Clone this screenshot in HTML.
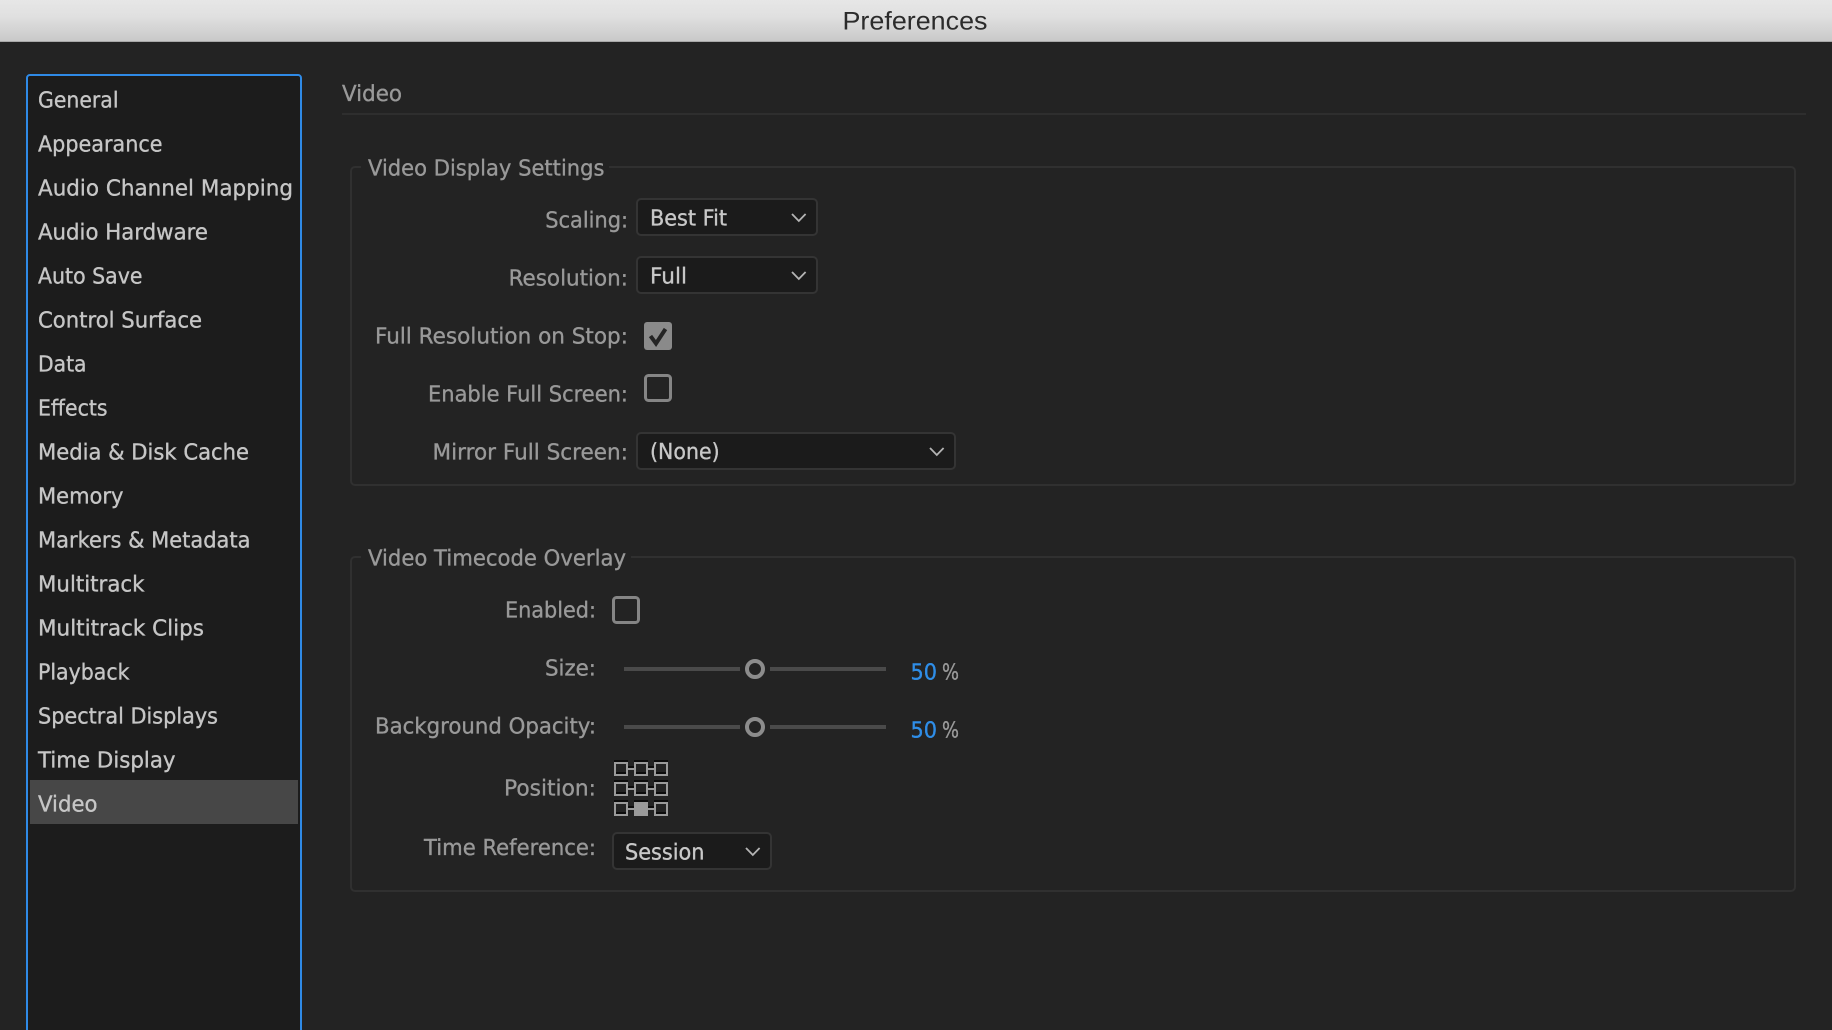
<!DOCTYPE html>
<html lang="en">
<head>
<meta charset="utf-8">
<title>Preferences</title>
<style>
html,body{margin:0;padding:0;width:1832px;height:1030px;overflow:hidden;background:#232323}
svg{display:block;position:absolute;left:0;top:0}
text{font-family:"DejaVu Sans","Liberation Sans",sans-serif;font-size:22px;text-rendering:geometricPrecision;stroke-width:.35px}
.s{fill:#c6c6c6;stroke:#c6c6c6}
.l{fill:#999;stroke:#999}
.v{fill:#c8c8c8;stroke:#c8c8c8}
.b{fill:#2f8ee8;stroke:#2f8ee8}
.dd{fill:#1b1b1b;stroke:#343434;stroke-width:2}
.ch{fill:none;stroke:#b4b4b4;stroke-width:1.800}
.cb{fill:none;stroke:#858585;stroke-width:3}
.gr{fill:none;stroke:#303030;stroke-width:2}
.sl{fill:#4a4a4a}
.kn{fill:#232323;stroke:#8c8c8c;stroke-width:4}
.pc{fill:#232323;stroke:#9a9a9a;stroke-width:2}
</style>
</head>
<body>
<svg width="1832" height="1030" viewBox="0 0 1832 1030" xmlns="http://www.w3.org/2000/svg">
<defs>
<linearGradient id="tb" x1="0" y1="0" x2="0" y2="1">
<stop offset="0" stop-color="#e7e7e7"/><stop offset="0.4" stop-color="#e0e0e0"/><stop offset="1" stop-color="#c9c9c9"/>
</linearGradient>
</defs>
<rect width="1832" height="1030" fill="#232323"/>
<rect width="1832" height="41" fill="url(#tb)"/>
<rect y="41" width="1832" height="1" fill="#a8a8a8"/>
<text x="842.500" y="29.500" textLength="145" lengthAdjust="spacingAndGlyphs" style="font-family:'Liberation Sans',sans-serif;font-size:25.500px;stroke-width:0" fill="#2b2b2b">Preferences</text>

<!-- sidebar -->
<rect x="27" y="75" width="274" height="1000" rx="3" fill="#1c1c1c" stroke="#2f8ae6" stroke-width="2"/>
<rect x="30" y="780" width="268" height="44" fill="#474747"/>
<text class="s" x="38" y="107.500" textLength="80.500" lengthAdjust="spacingAndGlyphs">General</text>
<text class="s" x="38" y="151.500" textLength="124.500" lengthAdjust="spacingAndGlyphs">Appearance</text>
<text class="s" x="38" y="195.500" textLength="255" lengthAdjust="spacingAndGlyphs">Audio Channel Mapping</text>
<text class="s" x="38" y="239.500" textLength="170" lengthAdjust="spacingAndGlyphs">Audio Hardware</text>
<text class="s" x="38" y="283.500" textLength="104.500" lengthAdjust="spacingAndGlyphs">Auto Save</text>
<text class="s" x="38" y="327.500" textLength="164" lengthAdjust="spacingAndGlyphs">Control Surface</text>
<text class="s" x="38" y="371.500" textLength="48.500" lengthAdjust="spacingAndGlyphs">Data</text>
<text class="s" x="38" y="415.500" textLength="69.500" lengthAdjust="spacingAndGlyphs">Effects</text>
<text class="s" x="38" y="459.500" textLength="211" lengthAdjust="spacingAndGlyphs">Media &amp; Disk Cache</text>
<text class="s" x="38" y="503.500" textLength="85.500" lengthAdjust="spacingAndGlyphs">Memory</text>
<text class="s" x="38" y="547.500" textLength="212.500" lengthAdjust="spacingAndGlyphs">Markers &amp; Metadata</text>
<text class="s" x="38" y="591.500" textLength="106.500" lengthAdjust="spacingAndGlyphs">Multitrack</text>
<text class="s" x="38" y="635.500" textLength="166" lengthAdjust="spacingAndGlyphs">Multitrack Clips</text>
<text class="s" x="38" y="679.500" textLength="91.500" lengthAdjust="spacingAndGlyphs">Playback</text>
<text class="s" x="38" y="723.500" textLength="180" lengthAdjust="spacingAndGlyphs">Spectral Displays</text>
<text class="s" x="38" y="767.500" textLength="137.500" lengthAdjust="spacingAndGlyphs">Time Display</text>
<text class="s" x="38" y="811.500" textLength="59.500" lengthAdjust="spacingAndGlyphs">Video</text>

<!-- header -->
<text class="l" x="342" y="101" textLength="60" lengthAdjust="spacingAndGlyphs">Video</text>
<rect x="342" y="113" width="1464" height="2" fill="#2e2e2e"/>

<!-- group 1 -->
<rect class="gr" x="351" y="167" width="1444" height="318" rx="4"/>
<rect x="361" y="160" width="248" height="14" fill="#232323"/>
<text class="l" x="368" y="175.500" textLength="236.500" lengthAdjust="spacingAndGlyphs">Video Display Settings</text>

<text class="l" x="545.300" y="227.500" textLength="82.700" lengthAdjust="spacingAndGlyphs">Scaling:</text>
<rect class="dd" x="637" y="199" width="180" height="36" rx="4"/>
<text class="v" x="650" y="225.500" textLength="77" lengthAdjust="spacingAndGlyphs">Best Fit</text>
<path class="ch" d="M792 214L798.800 221L805.600 214"/>

<text class="l" x="508.600" y="285.500" textLength="119.400" lengthAdjust="spacingAndGlyphs">Resolution:</text>
<rect class="dd" x="637" y="257" width="180" height="36" rx="4"/>
<text class="v" x="650" y="283.500" textLength="37" lengthAdjust="spacingAndGlyphs">Full</text>
<path class="ch" d="M792 272L798.800 279L805.600 272"/>

<text class="l" x="375" y="343.500" textLength="253" lengthAdjust="spacingAndGlyphs">Full Resolution on Stop:</text>
<rect x="644" y="322" width="28" height="28" rx="3" fill="#8a8a8a"/>
<path d="M650.500 336L656 343.500L665.500 329" fill="none" stroke="#242424" stroke-width="4"/>

<text class="l" x="428" y="401.500" textLength="200" lengthAdjust="spacingAndGlyphs">Enable Full Screen:</text>
<rect class="cb" x="645.500" y="375.500" width="25" height="25" rx="3"/>

<text class="l" x="432.500" y="459.500" textLength="195.500" lengthAdjust="spacingAndGlyphs">Mirror Full Screen:</text>
<rect class="dd" x="637" y="433" width="318" height="36" rx="4"/>
<text class="v" x="650" y="459" textLength="69.600" lengthAdjust="spacingAndGlyphs">(None)</text>
<path class="ch" d="M930 448L936.800 455L943.600 448"/>

<!-- group 2 -->
<rect class="gr" x="351" y="557" width="1444" height="334" rx="4"/>
<rect x="361" y="550" width="270" height="14" fill="#232323"/>
<text class="l" x="368" y="565.500" textLength="258" lengthAdjust="spacingAndGlyphs">Video Timecode Overlay</text>

<text class="l" x="505" y="617.500" textLength="91" lengthAdjust="spacingAndGlyphs">Enabled:</text>
<rect class="cb" x="613.500" y="597.500" width="25" height="25" rx="3"/>

<text class="l" x="545" y="675.500" textLength="51" lengthAdjust="spacingAndGlyphs">Size:</text>
<rect class="sl" x="624" y="667" width="116" height="4"/>
<rect class="sl" x="770" y="667" width="116" height="4"/>
<circle class="kn" cx="755" cy="669" r="8"/>
<text class="b" x="910.500" y="679.500" textLength="26.500" lengthAdjust="spacingAndGlyphs">50</text>
<text class="l" x="942" y="679.500" textLength="17" lengthAdjust="spacingAndGlyphs">%</text>

<text class="l" x="375" y="733.500" textLength="221" lengthAdjust="spacingAndGlyphs">Background Opacity:</text>
<rect class="sl" x="624" y="725" width="116" height="4"/>
<rect class="sl" x="770" y="725" width="116" height="4"/>
<circle class="kn" cx="755" cy="727" r="8"/>
<text class="b" x="910.500" y="737.500" textLength="26.500" lengthAdjust="spacingAndGlyphs">50</text>
<text class="l" x="942" y="737.500" textLength="17" lengthAdjust="spacingAndGlyphs">%</text>

<text class="l" x="504" y="795.500" textLength="92" lengthAdjust="spacingAndGlyphs">Position:</text>
<g>
<path d="M614 760h14v2h-14zM634 760h14v2h-14zM654 760h14v2h-14zM614 780h14v2h-14zM634 780h14v2h-14zM654 780h14v2h-14zM614 800h14v2h-14zM634 800h14v2h-14zM654 800h14v2h-14z" fill="#0c0c0c"/>
<path d="M628 766h6v2h-6zM648 766h6v2h-6zM628 786h6v2h-6zM648 786h6v2h-6zM628 806h6v2h-6zM648 806h6v2h-6z" fill="#0c0c0c"/>
<path d="M628 768h6v2h-6zM648 768h6v2h-6zM628 788h6v2h-6zM648 788h6v2h-6zM628 808h6v2h-6zM648 808h6v2h-6z" fill="#9a9a9a"/>
<rect class="pc" x="615" y="763" width="12" height="12"/><rect class="pc" x="635" y="763" width="12" height="12"/><rect class="pc" x="655" y="763" width="12" height="12"/>
<rect class="pc" x="615" y="783" width="12" height="12"/><rect class="pc" x="635" y="783" width="12" height="12"/><rect class="pc" x="655" y="783" width="12" height="12"/>
<rect class="pc" x="615" y="803" width="12" height="12"/><rect x="634" y="802" width="14" height="14" fill="#9a9a9a"/><rect class="pc" x="655" y="803" width="12" height="12"/>
<path d="M616 772h10v2h-10zM636 772h10v2h-10zM656 772h10v2h-10zM616 792h10v2h-10zM636 792h10v2h-10zM656 792h10v2h-10zM616 812h10v2h-10zM656 812h10v2h-10z" fill="#0c0c0c"/>
</g>

<text class="l" x="424" y="855" textLength="172" lengthAdjust="spacingAndGlyphs">Time Reference:</text>
<rect class="dd" x="613" y="833" width="158" height="36" rx="4"/>
<text class="v" x="625" y="859.500" textLength="79.500" lengthAdjust="spacingAndGlyphs">Session</text>
<path class="ch" d="M746 848L752.800 855L759.600 848"/>
</svg>
</body>
</html>
